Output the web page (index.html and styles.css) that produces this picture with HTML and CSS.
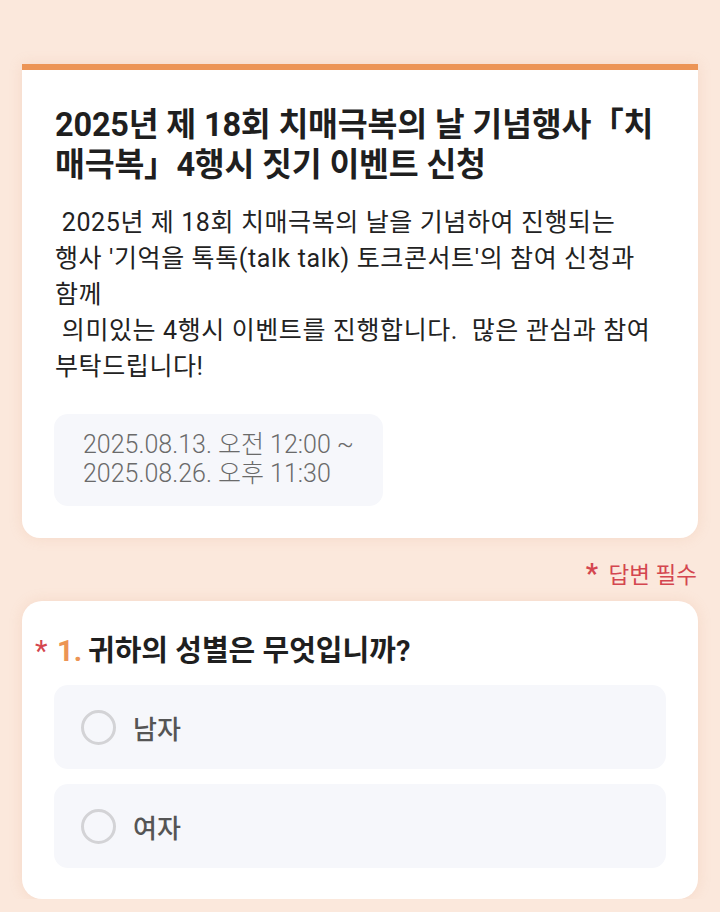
FILE: index.html
```html
<!DOCTYPE html>
<html lang="ko">
<head>
<meta charset="utf-8">
<link rel="stylesheet" href="styles.css">
</head>
<body>
<main class="page">
  <section class="card intro">
    <h1 class="title">2025년 제 18회 치매극복의 날 기념행사「치<br>매극복」4행시 짓기 이벤트 신청</h1>
    <p class="desc">&nbsp;2025년 제 18회 치매극복의 날을 기념하여 진행되는<br>행사 '기억을 톡톡(talk talk) 토크콘서트'의 참여 신청과<br>함께<br>&nbsp;의미있는 4행시 이벤트를 진행합니다.&nbsp; 많은 관심과 참여<br>부탁드립니다!</p>
    <div class="period">2025.08.13. 오전 12:00 ~<br>2025.08.26. 오후 11:30</div>
  </section>
  <div class="required-note"><span class="star">*</span> 답변 필수</div>
  <section class="card question">
    <h2 class="q-title"><span class="q-star">*</span><span class="q-num">1.</span><span class="q-text">귀하의 성별은 무엇입니까?</span></h2>
    <div class="options">
      <label class="option"><span class="radio"></span><span class="opt-label">남자</span></label>
      <label class="option"><span class="radio"></span><span class="opt-label">여자</span></label>
    </div>
  </section>
</main>
</body>
</html>
```
FILE: styles.css
```css
html, body {
  margin: 0;
  padding: 0;
  background: #fbe8dc;
}
body {
  font-family: Roboto, "Noto Sans CJK KR", "Noto Sans", sans-serif;
  color: #222;
}
.page {
  padding: 64px 22px 0;
}
.card {
  background: #fff;
  border-radius: 18px;
  box-shadow: 0 0 14px rgba(220, 150, 110, 0.18);
}
.intro {
  border-top: 6px solid #ec9455;
  border-radius: 0 0 18px 18px;
  padding: 35px 32px 32px 33px;
}
.title {
  margin: 0;
  font-size: 32.5px;
  line-height: 40px;
  font-weight: 700;
  color: #1f1f1f;
  letter-spacing: -0.2px;
}
.desc {
  margin: 20px 0 0;
  font-size: 25px;
  line-height: 36px;
  font-weight: 400;
  color: #222;
  letter-spacing: 0.6px;
}
.period {
  display: inline-block;
  margin-top: 29px;
  margin-left: -1px;
  padding: 16px 29px 18px;
  background: #f6f7fb;
  border-radius: 14px;
  font-size: 25px;
  line-height: 29px;
  color: #6a6a6a;
  font-weight: 300;
}
.required-note {
  text-align: right;
  padding: 22px 1px 12px 0;
  font-size: 22.5px;
  line-height: 28px;
  color: #d4464f;
}
.required-note .star {
  font-weight: 700;
  font-size: 27px;
  margin-right: 5px;
}
.question {
  padding: 33px 32px 31px 13px;
  border-radius: 20px;
}
.q-title {
  margin: 0;
  display: flex;
  align-items: baseline;
  font-size: 29px;
  line-height: 34px;
  font-weight: 700;
  color: #1f1f1f;
  letter-spacing: 0;
}
.q-star {
  color: #d4464f;
  font-weight: 400;
  font-size: 29px;
  width: 22px;
}
.q-num {
  color: #ec9455;
  width: 31px;
}
.options {
  margin: 17px 0 0 19px;
  display: flex;
  flex-direction: column;
  gap: 15px;
}
.option {
  display: flex;
  align-items: center;
  height: 84px;
  padding-left: 27px;
  background: #f6f7fb;
  border-radius: 14px;
}
.radio {
  width: 29px;
  height: 29px;
  border: 3px solid #d3d3d6;
  border-radius: 50%;
  box-sizing: content-box;
  flex: none;
}
.opt-label {
  margin-left: 17px;
  font-size: 26px;
  font-weight: 500;
  color: #555;
}
```
